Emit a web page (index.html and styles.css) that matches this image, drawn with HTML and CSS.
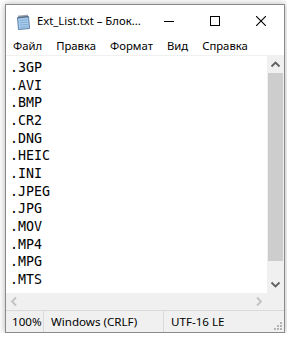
FILE: index.html
```html
<!DOCTYPE html>
<html lang="ru">
<head>
    <meta charset="UTF-8">
    <meta name="viewport" content="width=device-width, initial-scale=1.0">
    <title>Ext_List.txt – Блокнот</title>
    <link rel="stylesheet" href="styles.css">
</head>
<body>

    <div class="window">
        <div class="titlebar">
            <svg class="app-icon" width="16" height="16" viewBox="0 0 16 16">
                <path d="M2.5 3.5 L13.5 2.5 L14.5 14.5 L3.5 15.5 Z" fill="#a9cdee" stroke="#5b7fa6"/>
                <path d="M4.5 6.5 L12.5 5.8 M4.7 8.8 L12.7 8.1 M4.9 11.1 L12.9 10.4 M5.1 13.4 L13.1 12.7" stroke="#7aa3cc" stroke-width="0.8"/>
                <path d="M4 1.5 V4.5 M6 1.3 V4.3 M8 1.1 V4.1 M10 0.9 V3.9 M12 0.7 V3.7" stroke="#3c4e63" stroke-width="1"/>
            </svg>
            <span class="title">Ext_List.txt – Блок...</span>
            <div class="controls">
                <span class="ctl">
                    <svg width="10" height="10" viewBox="0 0 10 10"><path d="M0 5.5 H10" stroke="#000"/></svg>
                </span>
                <span class="ctl">
                    <svg width="10" height="10" viewBox="0 0 10 10"><rect x="0.5" y="0.5" width="9" height="9" fill="none" stroke="#000"/></svg>
                </span>
                <span class="ctl">
                    <svg width="10" height="10" viewBox="0 0 10 10"><path d="M0 0 L10 10 M10 0 L0 10" stroke="#000" stroke-width="1.1"/></svg>
                </span>
            </div>
        </div>

        <div class="menubar">
            <span>Файл</span>
            <span>Правка</span>
            <span>Формат</span>
            <span>Вид</span>
            <span>Справка</span>
        </div>

        <div class="editor">
            <div class="text-row">
                <pre class="content">.3GP
.AVI
.BMP
.CR2
.DNG
.HEIC
.INI
.JPEG
.JPG
.MOV
.MP4
.MPG
.MTS</pre>
                <div class="vscroll">
                    <span class="sbtn">
                        <svg width="17" height="17" viewBox="0 0 17 17"><path d="M4.5 10.5 L8.5 6.5 L12.5 10.5" fill="none" stroke="#606060" stroke-width="1.8"/></svg>
                    </span>
                    <div class="track"><div class="thumb"></div></div>
                    <span class="sbtn">
                        <svg width="17" height="17" viewBox="0 0 17 17"><path d="M4.5 6.5 L8.5 10.5 L12.5 6.5" fill="none" stroke="#606060" stroke-width="1.8"/></svg>
                    </span>
                </div>
            </div>
            <div class="hscroll">
                <span class="sbtn">
                    <svg width="17" height="17" viewBox="0 0 17 17"><path d="M10 4.5 L6 8.5 L10 12.5" fill="none" stroke="#c2c2c2" stroke-width="1.8"/></svg>
                </span>
                <div class="htrack"></div>
                <span class="sbtn">
                    <svg width="17" height="17" viewBox="0 0 17 17"><path d="M7 4.5 L11 8.5 L7 12.5" fill="none" stroke="#c2c2c2" stroke-width="1.8"/></svg>
                </span>
                <span class="corner"></span>
            </div>
        </div>

        <div class="statusbar">
            <span class="cell zoom">100%</span>
            <span class="cell eol">Windows (CRLF)</span>
            <span class="cell enc">UTF-16 LE</span>
            <svg class="grip" width="10" height="10" viewBox="0 0 10 10">
                <rect x="7" y="1" width="2" height="2" fill="#b4b4b4"/>
                <rect x="4" y="4" width="2" height="2" fill="#b4b4b4"/>
                <rect x="7" y="4" width="2" height="2" fill="#b4b4b4"/>
                <rect x="1" y="7" width="2" height="2" fill="#b4b4b4"/>
                <rect x="4" y="7" width="2" height="2" fill="#b4b4b4"/>
                <rect x="7" y="7" width="2" height="2" fill="#b4b4b4"/>
            </svg>
        </div>
    </div>

</body>
</html>
```

FILE: styles.css
```css
body {
    margin: 0;
    padding: 4px 0 0 5px;
    background-color: #fff;
    font-family: "Noto Sans", sans-serif;
    font-size: 11.3px;
    color: #000;
}

.window {
    width: 278px;
    height: 327px;
    border: 1px solid #8a8a8a;
    box-shadow: 0 0 7px rgba(0, 0, 0, 0.3);
    background-color: #fff;
    display: flex;
    flex-direction: column;
}

/* title bar */
.titlebar {
    height: 31px;
    display: flex;
    align-items: center;
}

.app-icon {
    margin-left: 9px;
    margin-top: 2px;
}

.title {
    margin-left: 6px;
    flex: 1;
    white-space: nowrap;
}

.controls {
    display: flex;
    align-self: stretch;
}

.ctl {
    width: 46px;
    display: flex;
    align-items: center;
    justify-content: center;
}

/* menu */
.menubar {
    height: 19px;
    display: flex;
    align-items: center;
}

.menubar span {
    padding: 0 7px;
}

/* edit area */
.editor {
    flex: 1;
    display: flex;
    flex-direction: column;
    border-top: 1px solid #f0f0f0;
}

.text-row {
    flex: 1;
    display: flex;
    min-height: 0;
}

.content {
    flex: 1;
    margin: 0;
    padding: 3px 0 0 4px;
    font-family: "DejaVu Sans Mono", monospace;
    font-size: 13.3px;
    line-height: 17.65px;
    overflow: hidden;
}

.vscroll {
    width: 17px;
    background-color: #f0f0f0;
    display: flex;
    flex-direction: column;
}

.sbtn {
    width: 17px;
    height: 17px;
    display: block;
}

.sbtn svg {
    display: block;
}

.track {
    flex: 1;
    padding: 0 1px;
    display: flex;
    flex-direction: column;
}

.thumb {
    height: 188px;
    background-color: #cdcdcd;
}

.hscroll {
    height: 17px;
    background-color: #f0f0f0;
    display: flex;
}

.htrack {
    flex: 1;
}

.corner {
    width: 17px;
}

/* status bar */
.statusbar {
    height: 21px;
    border-top: 1px solid #d9d9d9;
    background-color: #f0f0f0;
    display: flex;
    align-items: center;
    position: relative;
    font-size: 11.6px;
}

.cell {
    align-self: stretch;
    display: flex;
    align-items: center;
    white-space: nowrap;
}

.zoom {
    width: 31px;
    padding-left: 6px;
    border-right: 1px solid #dadada;
}

.eol {
    width: 112px;
    padding-left: 7px;
    border-right: 1px solid #dadada;
}

.enc {
    padding-left: 7px;
}

.grip {
    position: absolute;
    right: 1px;
    bottom: 1px;
}
```
